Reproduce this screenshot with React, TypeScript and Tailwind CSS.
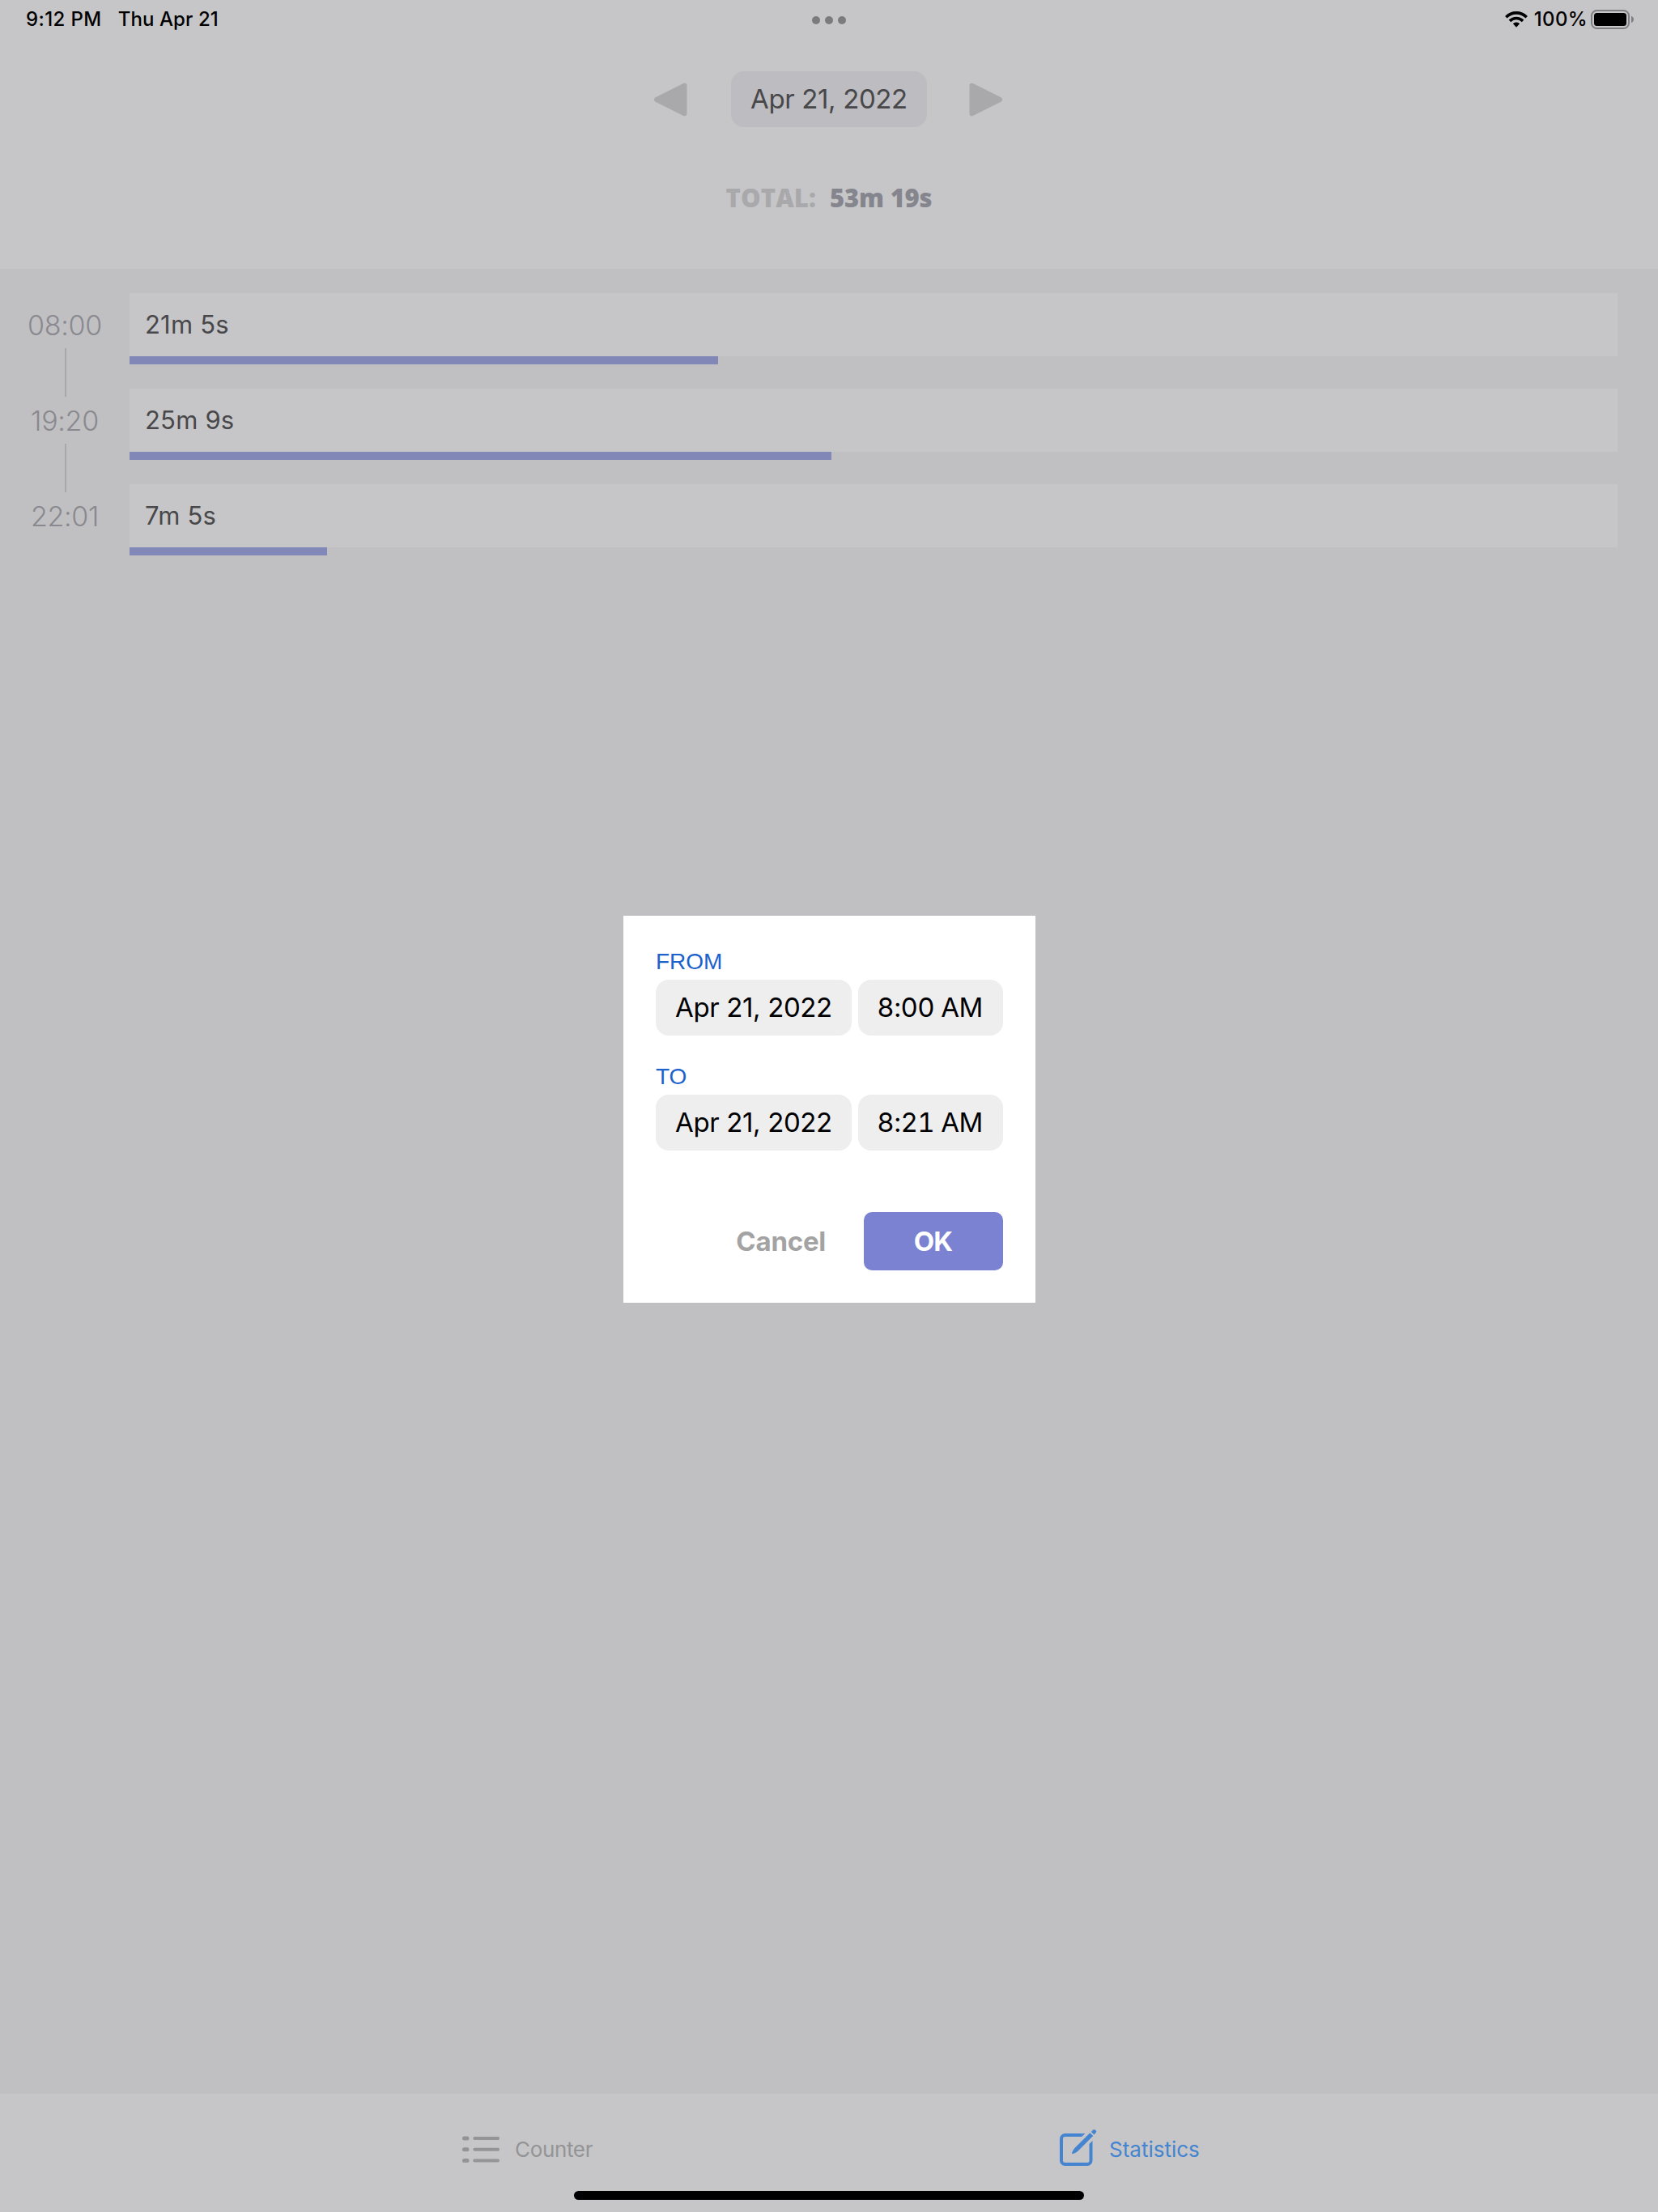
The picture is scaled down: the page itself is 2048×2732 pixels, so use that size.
import React from 'react';

type Session = { time: string; duration: string; progress: number };

const sessions: Session[] = [
  { time: '08:00', duration: '21m 5s', progress: 727 },
  { time: '19:20', duration: '25m 9s', progress: 867 },
  { time: '22:01', duration: '7m 5s', progress: 244 },
];

function WifiIcon() {
  return (
    <svg width="28" height="20" viewBox="0 0 28 20" fill="none" stroke="#000" strokeWidth="3.6">
      <path d="M1.3 7.2C8.4.1 19.6.1 26.7 7.2" />
      <path d="M5.9 11.9c4.6-4.5 11.6-4.5 16.2 0" />
      <path d="M10.1 15.6c2.2-2.1 5.6-2.1 7.8 0L14 19.8z" fill="#000" stroke="none" />
      <path d="M10.1 15.6c2.2-2.1 5.6-2.1 7.8 0" strokeWidth="1" />
    </svg>
  );
}

function BatteryIcon() {
  return (
    <svg width="54" height="24" viewBox="0 0 54 24">
      <rect x="1" y="1" width="46" height="22" rx="6.5" fill="none" stroke="#7f7f81" strokeWidth="2" />
      <rect x="4" y="4" width="40" height="16" rx="3.5" fill="#000" />
      <path d="M50 7.8c1.8.7 3 2.3 3 4.2s-1.2 3.5-3 4.2z" fill="#7f7f81" />
    </svg>
  );
}

function Arrow({ className = '' }: { className?: string }) {
  return (
    <svg width="42" height="42" viewBox="0 0 42 42" className={className}>
      <path
        d="M4 21 38.5 3.7V38.3z"
        fill="#a9a9ab"
        stroke="#a9a9ab"
        strokeWidth="6"
        strokeLinejoin="round"
      />
    </svg>
  );
}

function ListIcon() {
  return (
    <svg width="46" height="34" viewBox="0 0 46 34" fill="#949496">
      {[3, 16.8, 30.5].map((y) => (
        <g key={y}>
          <rect x="0" y={y - 2.5} width="8.5" height="5" rx="2.5" />
          <rect x="13.3" y={y - 2} width="32.7" height="4" rx="2" />
        </g>
      ))}
    </svg>
  );
}

function ComposeIcon() {
  return (
    <svg width="46" height="46" viewBox="0 0 46 46" fill="#4484d0">
      <path
        d="M27.5 7H6.5A4.500 4.500 0 0 0 2 11.500V38.500A4.500 4.500 0 0 0 6.500 43H34A4.500 4.500 0 0 0 38.500 38.500V18"
        fill="none"
        stroke="#4484d0"
        strokeWidth="4"
      />
      <path d="M27.4 5h4l-4 4z M36.500 18.100l4-4v4z" />
      <path d="M37.4 4.200 41.200 8 22.200 27C20.600 28.500 17.800 29.800 15.600 30.200 15.200 30.200 15 30 15.100 29.600 15.500 27.400 17 24.600 18.500 23z" />
      <path d="M38.900 2.900 41.300.6C42 0 43 0 43.700.6L44.700 1.600C45.400 2.300 45.400 3.300 44.700 4L42.400 6.400z" />
    </svg>
  );
}

function StatusBar() {
  return (
    <div className="grid h-12 grid-cols-3 items-center text-2xl font-medium text-black">
      <div className="flex items-center pl-8">
        <span className="tracking-[0.4px]">9:12 PM</span>
        <span className="ml-5 tracking-[0.1px]">Thu Apr 21</span>
      </div>
      <div className="flex justify-center gap-1.5 pt-0.5">
        <span className="size-2.5 rounded-full bg-[#7b7b7d]" />
        <span className="size-2.5 rounded-full bg-[#7b7b7d]" />
        <span className="size-2.5 rounded-full bg-[#7b7b7d]" />
      </div>
      <div className="flex items-center justify-end pr-[29px]">
        <WifiIcon />
        <span className="mr-1 ml-2 tracking-[0.35px]">100%</span>
        <BatteryIcon />
      </div>
    </div>
  );
}

function Header() {
  return (
    <header className="h-[332px] bg-[#c6c6c8]">
      <StatusBar />
      <div className="mt-10 flex h-[69px] items-center justify-center gap-[54px]">
        <Arrow />
        <div className="flex h-[69px] w-[242px] items-center justify-center rounded-2xl bg-[#bcbcc1] text-[33px] tracking-[-0.37px] text-[#48484a]">
          Apr 21, 2022
        </div>
        <Arrow className="mr-0.5 -ml-0.5 rotate-180" />
      </div>
      <div className="mt-[67px] flex h-10 items-center justify-center gap-[17px] font-['Open_Sans',sans-serif] text-[31px] font-extrabold">
        <span className="tracking-[0.1px] text-[#a9a9ab]">TOTAL:</span>
        <span className="tracking-[-0.2px] text-[#85858d]">53m 19s</span>
      </div>
    </header>
  );
}

function SessionRow({ session, last }: { session: Session; last: boolean }) {
  return (
    <div className="flex h-[118px] pr-[50px]">
      <div className="flex w-40 flex-col items-center">
        <div className="flex h-[68px] shrink-0 items-center pt-2.5 text-[34px] font-[350] tracking-[-0.3px] text-[#89898f]">
          {session.time}
        </div>
        {!last && <div className="ml-0.5 h-[60px] w-0.5 shrink-0 bg-[#a8a8aa]" />}
      </div>
      <div className="flex-1">
        <div className="flex h-[78px] items-center bg-[#c6c6c8] pl-[19px] text-[31px] tracking-[0.2px] text-[#48484a]">
          {session.duration}
        </div>
        <div className="h-2.5 bg-[#8187b6]" style={{ width: session.progress }} />
      </div>
    </div>
  );
}

function DateTimeField({ label, date, time }: { label: string; date: string; time: string }) {
  return (
    <div>
      <div className="mb-1.5 h-[33px] font-['Liberation_Sans',sans-serif] text-[28px] leading-[34px] text-[#1c62cc]">
        {label}
      </div>
      <div className="flex justify-between text-[33px] tracking-[-0.37px] text-black">
        <div className="flex h-[69px] w-[242px] items-center justify-center rounded-2xl bg-[#eeeeef]">{date}</div>
        <div className="flex h-[69px] w-[179px] items-center justify-center rounded-2xl bg-[#eeeeef] pr-0.5 tracking-[-0.6px] tabular-nums">
          {time}
        </div>
      </div>
    </div>
  );
}

function EditDialog() {
  return (
    <div className="absolute inset-0 flex items-center justify-center pt-2 pl-px">
      <div className="h-[478px] w-[509px] bg-white p-10">
        <DateTimeField label="FROM" date="Apr 21, 2022" time="8:00 AM" />
        <div className="h-[34px]" />
        <DateTimeField label="TO" date="Apr 21, 2022" time="8:21 AM" />
        <div className="mt-[76px] flex items-center justify-end text-[33px] font-bold">
          <button className="mr-[47px] pt-px tracking-[-0.25px] text-[#a3a3a3]">Cancel</button>
          <button className="h-[72px] w-[172px] rounded-[10px] bg-[#7b82d2] pt-px pr-px tracking-[-0.8px] text-white">
            OK
          </button>
        </div>
      </div>
    </div>
  );
}

function TabBar() {
  return (
    <nav className="flex h-[146px] flex-col bg-[#c6c6c8] text-[26px]">
      <div className="flex h-[120px] pt-10">
        <div className="flex h-[58px] w-[1309px] items-center pl-[571px] text-[#949496]">
          <ListIcon />
          <span className="ml-[19px] pb-0.5 tracking-[-0.35px]">Counter</span>
        </div>
        <div className="flex h-[58px] items-center text-[#4484d0]">
          <div className="-mt-1">
            <ComposeIcon />
          </div>
          <span className="ml-[15px] pb-0.5">Statistics</span>
        </div>
      </div>
      <div className="mx-auto h-[11px] w-[630px] rounded-full bg-black" />
    </nav>
  );
}

export default function App() {
  return (
    <div className="relative flex h-[2732px] w-[2048px] flex-col bg-[#c0c0c2] font-['Inter',sans-serif]">
      <Header />
      <main className="flex-1 pt-[30px]">
        {sessions.map((s, i) => (
          <SessionRow key={s.time} session={s} last={i === sessions.length - 1} />
        ))}
      </main>
      <TabBar />
      <EditDialog />
    </div>
  );
}
